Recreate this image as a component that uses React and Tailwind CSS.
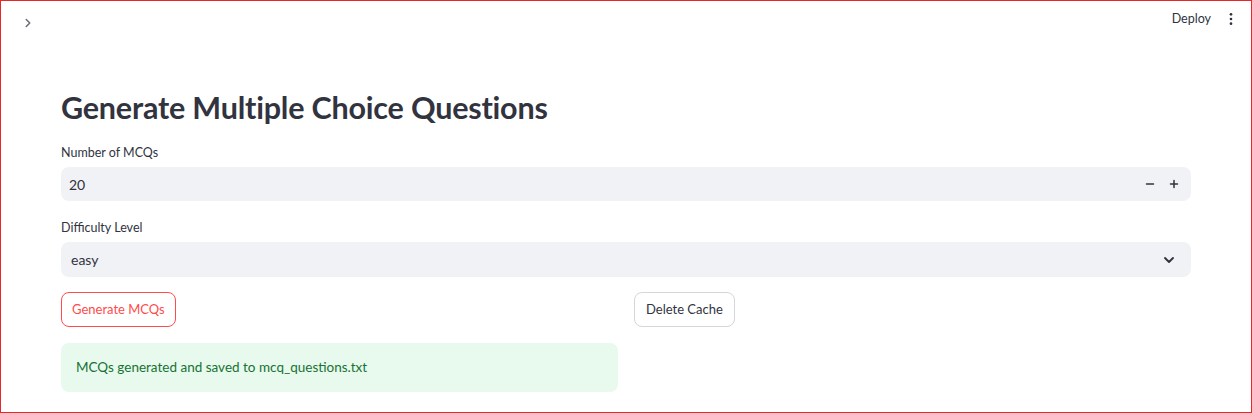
import React from 'react';

const font = { fontFamily: 'Lato, "Noto Sans", sans-serif' };

export default function App() {
  return (
    <div style={font} className="w-[1252px] h-[413px] bg-white border border-[#e8272a] text-[#31333f] overflow-hidden flex flex-col">
      <div className="h-[38px] flex items-center justify-between pl-[20px] pr-[12px] shrink-0">
        <svg width="14" height="14" viewBox="0 0 24 24" className="mt-[6px]" fill="none" stroke="#6b6e78" strokeWidth="2.6" strokeLinecap="round" strokeLinejoin="round">
          <path d="M9 6l6 6-6 6" />
        </svg>
        <div className="flex items-center gap-[12px] -mt-[2px]">
          <span className="text-[12.5px] text-[#31333f]">Deploy</span>
          <svg width="16" height="16" viewBox="0 0 24 24" fill="#31333f">
            <circle cx="12" cy="5" r="2" />
            <circle cx="12" cy="12" r="2" />
            <circle cx="12" cy="19" r="2" />
          </svg>
        </div>
      </div>

      <div className="pl-[60px] pr-[60px] pt-[48px] flex flex-col">
        <h1 className="text-[30.5px] font-bold leading-[40px] text-[#31333f] tracking-[-0.2px]">Generate Multiple Choice Questions</h1>

        <label className="text-[12.5px] mt-[18px] leading-[16px]">Number of MCQs</label>
        <div className="mt-[6px] h-[34px] bg-[#f0f2f6] rounded-[8px] flex items-center justify-between pl-[8px] pr-[10px]">
          <span className="text-[14px]">20</span>
          <div className="flex items-center gap-[10px] text-[#31333f]">
            <svg width="14" height="14" viewBox="0 0 24 24" stroke="currentColor" strokeWidth="2.6" strokeLinecap="round"><path d="M6 12h12" /></svg>
            <svg width="14" height="14" viewBox="0 0 24 24" stroke="currentColor" strokeWidth="2.6" strokeLinecap="round"><path d="M6 12h12M12 6v12" /></svg>
          </div>
        </div>

        <label className="text-[12.5px] mt-[19px] leading-[16px]">Difficulty Level</label>
        <div className="mt-[6px] h-[35px] bg-[#f0f2f6] rounded-[8px] flex items-center justify-between pl-[10px] pr-[14px]">
          <span className="text-[14px]">easy</span>
          <svg width="16" height="16" viewBox="0 0 24 24" fill="none" stroke="#31333f" strokeWidth="2.8" strokeLinecap="round" strokeLinejoin="round"><path d="M6 9l6 6 6-6" /></svg>
        </div>

        <div className="grid grid-cols-2 gap-[16px] mt-[15px]">
          <div className="flex flex-col gap-[16px]">
            <button className="self-start h-[35px] px-[10px] rounded-[8px] border border-[#ff4b4b] text-[#ff4b4b] text-[13px] bg-white">Generate MCQs</button>
            <div className="h-[49px] rounded-[8px] bg-[#e8f9ee] flex items-center px-[15px] text-[13.5px] text-[#177233]">MCQs generated and saved to mcq_questions.txt</div>
          </div>
          <div>
            <button className="h-[35px] px-[11px] rounded-[8px] border border-[#d6d6d9] text-[#31333f] text-[13px] bg-white">Delete Cache</button>
          </div>
        </div>
      </div>
    </div>
  );
}
